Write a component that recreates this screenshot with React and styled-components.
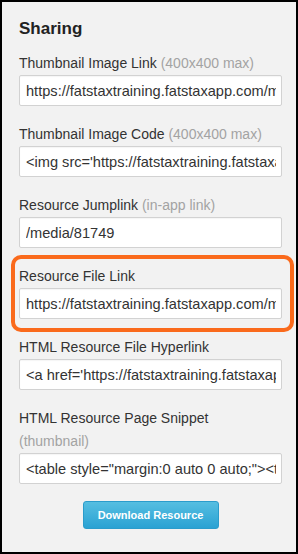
import React from 'react'
import styled, { createGlobalStyle } from 'styled-components'

const fields = [
  { label: 'Thumbnail Image Link', hint: '(400x400 max)', value: 'https://fatstaxtraining.fatstaxapp.com/media/81749/thumbnail' },
  { label: 'Thumbnail Image Code', hint: '(400x400 max)', value: "<img src='https://fatstaxtraining.fatstaxapp.com/media/81749/thumbnail' />" },
  { label: 'Resource Jumplink', hint: '(in-app link)', value: '/media/81749' },
  { label: 'Resource File Link', value: 'https://fatstaxtraining.fatstaxapp.com/media/81749/file', $marked: true },
  { label: 'HTML Resource File Hyperlink', value: "<a href='https://fatstaxtraining.fatstaxapp.com/media/81749/file'>" },
  { label: 'HTML Resource Page Snippet', hint: '(thumbnail)', value: '<table style="margin:0 auto 0 auto;"><tr><td>' },
]

const App = () => {
  return (
    <>
      <GlobalStyle />
      <Panel>
        <Heading>Sharing</Heading>
        {fields.map((f) => (
          <Field key={f.label} $marked={f.$marked}>
            <Label>
              {f.label} {f.hint && <Hint>{f.hint}</Hint>}
            </Label>
            <Input readOnly value={f.value} />
          </Field>
        ))}
        <ButtonRow>
          <Button>Download Resource</Button>
        </ButtonRow>
      </Panel>
    </>
  )
}

const GlobalStyle = createGlobalStyle`
  html, body {
    margin: 0;
    padding: 0;
    background: #000;
  }
`

const Panel = styled.div`
  box-sizing: border-box;
  width: 298px;
  height: 554px;
  border: 2px solid #000;
  background: #f2f2f2;
  padding: 17px 14px 0 17px;
  font-family: "Liberation Sans", Arial, sans-serif;
  color: #333;
  overflow: hidden;
`

const Heading = styled.h2`
  margin: 0 0 13px;
  font-size: 17px;
  line-height: 20px;
  font-weight: bold;
  color: #222;
`

const Field = styled.div`
  position: relative;
  margin-bottom: 17px;
  &::before {
    content: '';
    display: ${props => props.$marked ? 'block' : 'none'};
    position: absolute;
    top: -10px;
    left: -8px;
    right: -12px;
    bottom: -13px;
    border: 4px solid #fa6a1c;
    border-radius: 10px;
    pointer-events: none;
  }
`

const Label = styled.div`
  font-size: 14px;
  line-height: 23px;
  color: #333;
`

const Hint = styled.span`
  color: #a3a3a3;
`

const Input = styled.input`
  display: block;
  box-sizing: border-box;
  width: 263px;
  height: 31px;
  margin: 0;
  padding: 0 5px 0 6px;
  border: 1px solid #d2d2d2;
  border-radius: 2px;
  background: #fff;
  box-shadow: inset 0 1px 1px rgba(0, 0, 0, 0.04);
  font-family: "Liberation Sans", Arial, sans-serif;
  font-size: 14.6px;
  color: #333;
  outline: none;
`

const ButtonRow = styled.div`
  display: flex;
  justify-content: center;
  width: 263px;
`

const Button = styled.button`
  width: 136px;
  height: 28px;
  padding: 0;
  border: 1px solid #2b9ccb;
  border-radius: 3px;
  background: linear-gradient(#56bee1, #2aa2d3);
  color: #fff;
  font-family: "Liberation Sans", Arial, sans-serif;
  font-size: 11px;
  font-weight: bold;
  cursor: pointer;
`

export default App
